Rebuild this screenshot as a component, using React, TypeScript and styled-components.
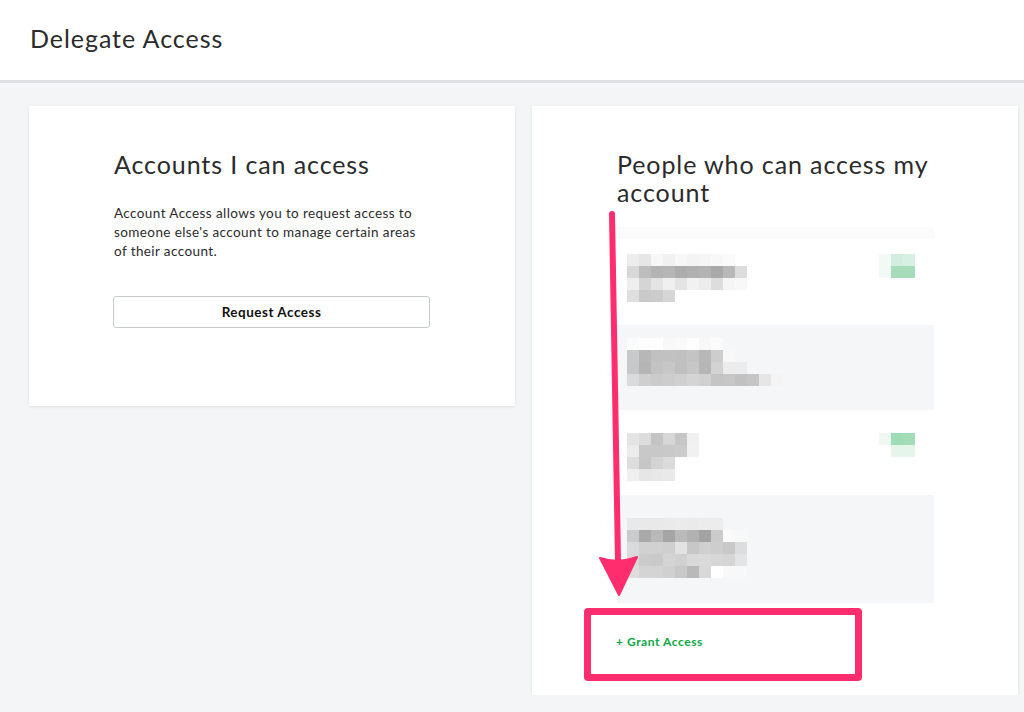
import React from 'react';
import styled, { createGlobalStyle } from 'styled-components';

const GlobalStyle = createGlobalStyle`
  * { box-sizing: border-box; }
  body {
    margin: 0;
    background: #f4f5f7;
    font-family: Lato, "Open Sans", Arial, sans-serif;
    color: #2b2b2b;
  }
`;

const Header = styled.header`
  height: 83px;
  background: #fff;
  border-bottom: 3px solid #dfe0e3;
  padding: 0 30px;
  display: flex;
  align-items: center;
`;

const PageTitle = styled.h1`
  margin: 0 0 5px;
  font-size: 25px;
  font-weight: 400;
  letter-spacing: 0.95px;
`;

const Main = styled.main`
  display: flex;
  align-items: flex-start;
  gap: 17px;
  padding: 23px 0 0 29px;
`;

const Card = styled.section<{ $height: number }>`
  position: relative;
  width: 486px;
  height: ${p => p.$height}px;
  background: #fff;
  box-shadow: 0 1px 3px rgba(0, 0, 0, 0.1);
  padding: 44px 85px 0;
`;

const CardTitle = styled.h2`
  margin: 0;
  font-size: 25px;
  line-height: 28px;
  font-weight: 400;
  letter-spacing: 0.9px;
`;

const Text = styled.p`
  margin: 26px 0 0;
  font-size: 13.5px;
  line-height: 19px;
  letter-spacing: 0.4px;
  color: #2b2b2b;
`;

const OutlineButton = styled.button`
  display: block;
  width: 317px;
  height: 32px;
  margin-top: 35px;
  margin-left: -1px;
  background: #fff;
  border: 1px solid #c7cbd0;
  border-radius: 3px;
  font-family: inherit;
  font-size: 13.5px;
  font-weight: 700;
  letter-spacing: 0.5px;
  color: #111;
  cursor: pointer;
`;

const List = styled.div`
  margin-top: 21px;
  width: 317px;
  display: flex;
  flex-direction: column;
`;

const ListHead = styled.div`
  height: 12px;
  background: #fbfbfc;
`;

const Row = styled.div<{ $shaded?: boolean; $height: number }>`
  height: ${p => p.$height}px;
  background: ${p => (p.$shaded ? '#f5f6f8' : '#fff')};
  svg { display: block; }
`;

const GrantRow = styled.div`
  margin-top: 27px;
  margin-left: -1px;
`;

const GrantLink = styled.a`
  font-size: 12px;
  font-weight: 700;
  letter-spacing: 0.55px;
  color: #08a843;
  text-decoration: none;
  cursor: pointer;
`;

const Highlight = styled.div`
  position: absolute;
  left: 52px;
  top: 502px;
  width: 278px;
  height: 73px;
  border: 7px solid #ff2d6e;
  border-radius: 4px;
  pointer-events: none;
`;

const ArrowLayer = styled.svg`
  position: absolute;
  left: 0;
  top: 0;
  width: 100%;
  height: 100%;
  overflow: visible;
  pointer-events: none;
`;

type Cell = [number, number, string];

interface RowData {
  height: number;
  shaded?: boolean;
  top: number;
  lines: string[];
  extra?: Cell[];
}

const CELL = 12;

const rows: RowData[] = [
  {
    height: 86,
    top: 15,
    lines: [
      'ed e6 f7 f1 f7 f4 f5 f8 fa',
      'd8 bd b3 b6 ad b0 b3 a9 b8 dc',
      'ee d5 e3 f0 e4 f1 ec dd f5 f8',
      'df c9 cb d6',
    ],
    extra: [
      [21, 0, '#f3faf5'],
      [22, 0, '#d2ede0'],
      [23, 0, '#d8f0e3'],
      [21, 1, '#f3faf5'],
      [22, 1, '#a6dcb9'],
      [23, 1, '#a6dcb9'],
    ],
  },
  {
    height: 85,
    shaded: true,
    top: 13,
    lines: [
      'fb fe fe f8 fa fe f8 fb',
      'c9 b7 c1 c1 c0 c4 b7 cd f8',
      'c8 b5 c3 c7 bf c7 b6 d2 ec ec',
      'da cf cb cd d0 d4 d0 c5 c6 c1 c5 e6 f4',
    ],
  },
  {
    height: 85,
    top: 23,
    lines: [
      'e4 dc c4 d6 c6 f0',
      'ec c8 c8 c9 cb f1',
      'dd c6 d3 db',
      'ef e6 e7 e9',
    ],
    extra: [
      [21, 0, '#eef8f1'],
      [22, 0, '#9fdbb4'],
      [23, 0, '#a3dcb7'],
      [22, 1, '#e6f5ec'],
      [23, 1, '#e6f5ec'],
    ],
  },
  {
    height: 108,
    shaded: true,
    top: 23,
    lines: [
      'e9 e9 e9 ea eb ea ec ec',
      'cb a9 b9 a5 ba b2 a3 cb fa f8',
      'da d1 d1 cf e2 c7 d0 cd c8 dd',
      'd9 cb c9 d4 d1 d9 da d7 d5 e4',
      'dd d4 d4 d0 c8 b9 d8 ff f8 f8',
    ],
  },
];

// pixelated (redacted) content of one row
function Mosaic({ row }: { row: RowData }) {
  const cells: Cell[] = [];
  row.lines.forEach((line, y) => {
    line.split(' ').forEach((v, x) => cells.push([x, y, `#${v}${v}${v}`]));
  });
  (row.extra || []).forEach(c => cells.push(c));

  return (
    <svg width="317" height={row.height}>
      {cells.map(([x, y, fill]) => (
        <rect
          key={`${x}-${y}`}
          x={10 + x * CELL}
          y={row.top + y * CELL}
          width={CELL}
          height={CELL}
          fill={fill}
        />
      ))}
    </svg>
  );
}

export default function App() {
  return (
    <>
      <GlobalStyle />
      <Header>
        <PageTitle>Delegate Access</PageTitle>
      </Header>
      <Main>
        <Card $height={300}>
          <CardTitle>Accounts I can access</CardTitle>
          <Text>
            Account Access allows you to request access to someone else's account to manage
            certain areas of their account.
          </Text>
          <OutlineButton>Request Access</OutlineButton>
        </Card>

        <Card $height={589}>
          <CardTitle>People who can access my account</CardTitle>
          <List>
            <ListHead />
            {rows.map((row, i) => (
              <Row key={i} $shaded={row.shaded} $height={row.height}>
                <Mosaic row={row} />
              </Row>
            ))}
          </List>
          <GrantRow>
            <GrantLink>+ Grant Access</GrantLink>
          </GrantRow>

          <Highlight />
          <ArrowLayer>
            <line
              x1="80"
              y1="108"
              x2="86"
              y2="455"
              stroke="#ff2d6e"
              strokeWidth="6"
              strokeLinecap="round"
            />
            <path
              d="M68 452 Q86 458 105 451 L87 489 Z"
              fill="#ff2d6e"
              stroke="#ff2d6e"
              strokeWidth="2"
              strokeLinejoin="round"
            />
          </ArrowLayer>
        </Card>
      </Main>
    </>
  );
}
